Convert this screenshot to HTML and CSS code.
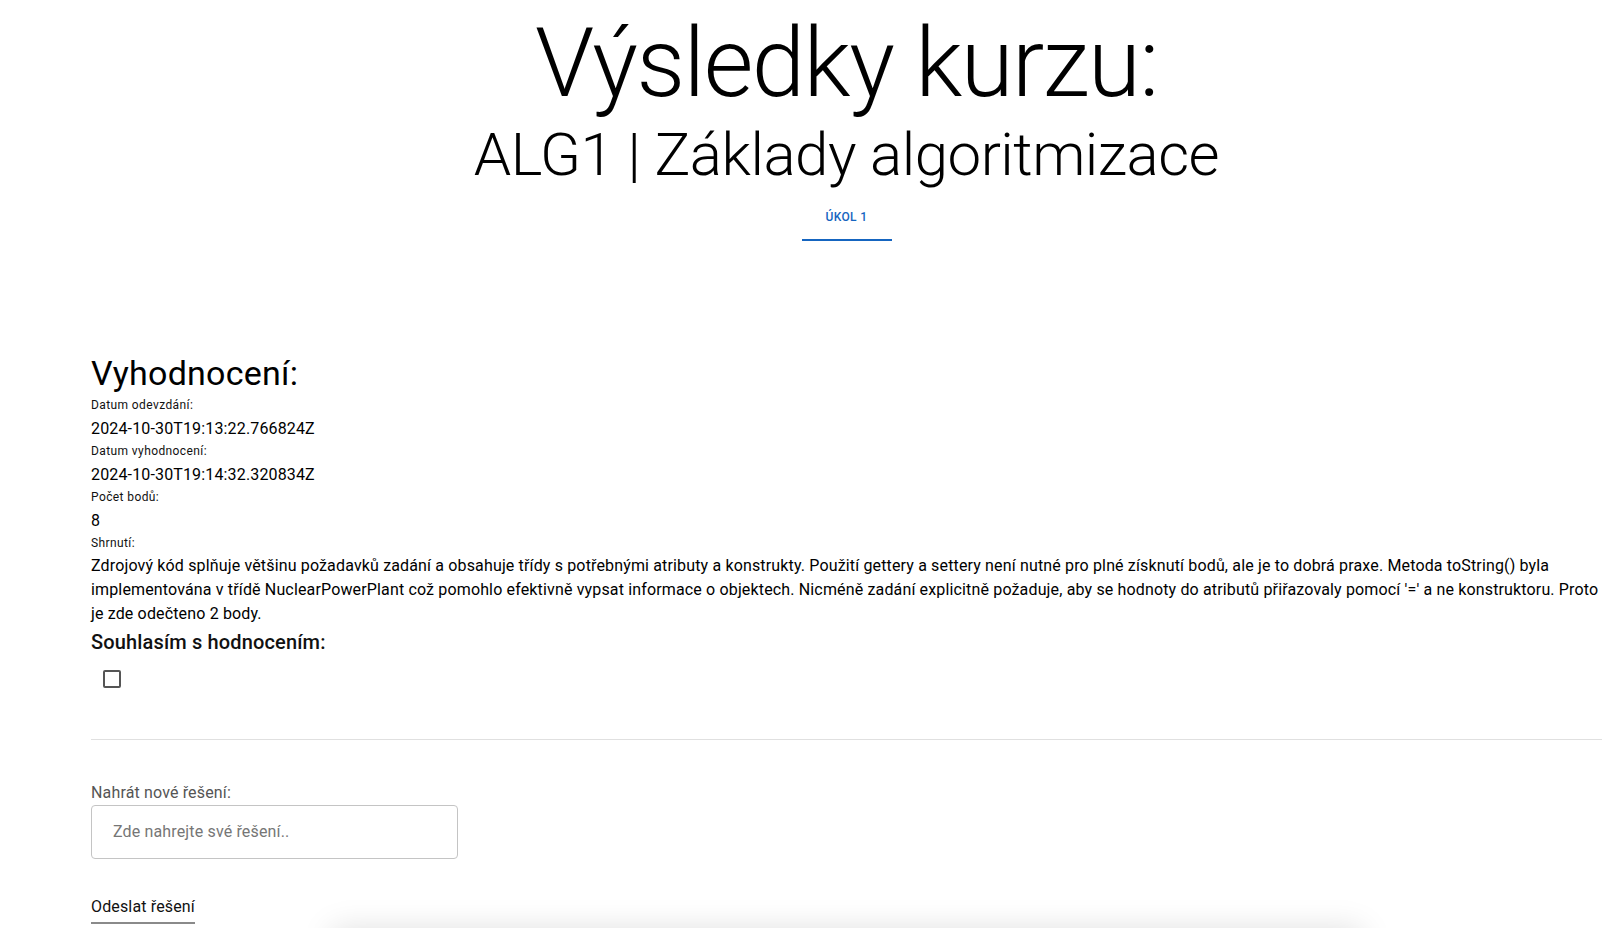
FILE: index.html
```html
<!DOCTYPE html>
<html lang="cs">
<head>
<meta charset="utf-8">
<title>Výsledky kurzu</title>
<link rel="stylesheet" href="styles.css">
</head>
<body>
<main class="page">
  <header class="header">
    <h1 class="title">Výsledky kurzu:</h1>
    <h2 class="subtitle">ALG1 | Základy algoritmizace</h2>
    <nav class="tabs">
      <button class="tab tab-active" type="button">Úkol 1</button>
    </nav>
  </header>

  <section class="evaluation">
    <h3 class="section-title">Vyhodnocení:</h3>
    <div class="field">
      <span class="field-label">Datum odevzdání:</span>
      <span class="field-value">2024-10-30T19:13:22.766824Z</span>
    </div>
    <div class="field">
      <span class="field-label">Datum vyhodnocení:</span>
      <span class="field-value">2024-10-30T19:14:32.320834Z</span>
    </div>
    <div class="field">
      <span class="field-label">Počet bodů:</span>
      <span class="field-value">8</span>
    </div>
    <div class="field">
      <span class="field-label">Shrnutí:</span>
      <p class="summary">Zdrojový kód splňuje většinu požadavků zadání a obsahuje třídy s potřebnými atributy a konstrukty. Použití gettery a settery není nutné pro plné získnutí bodů, ale je to dobrá praxe. Metoda toString() byla implementována v třídě NuclearPowerPlant což pomohlo efektivně vypsat informace o objektech. Nicméně zadání explicitně požaduje, aby se hodnoty do atributů přiřazovaly pomocí '=' a ne konstruktoru. Proto je zde odečteno 2 body.</p>
    </div>
    <h4 class="agree-title">Souhlasím s hodnocením:</h4>
    <label class="checkbox">
      <input type="checkbox" class="checkbox-input">
      <span class="checkbox-box"></span>
    </label>
  </section>

  <hr class="divider">

  <section class="upload">
    <label class="upload-label" for="solution">Nahrát nové řešení:</label>
    <input id="solution" class="upload-input" type="text" placeholder="Zde nahrejte své řešení..">
    <div class="submit-row">
      <button class="submit" type="button">Odeslat řešení</button>
    </div>
  </section>

  <div class="card"></div>
</main>
</body>
</html>
```
FILE: styles.css
```css
html, body {
  margin: 0;
  padding: 0;
  background: #ffffff;
}

body {
  font-family: Roboto, "Liberation Sans", sans-serif;
  color: #111111;
  overflow: hidden;
}

.page {
  padding: 0 18px 0 91px;
}

.header {
  display: flex;
  flex-direction: column;
  align-items: center;
}

.title {
  margin: 15px 0 0;
  font-weight: 300;
  font-size: 96px;
  line-height: 1;
  letter-spacing: -1.5px;
  color: #000;
}

.subtitle {
  margin: 7.5px 0 0;
  font-weight: 300;
  font-size: 60px;
  line-height: 1.2;
  letter-spacing: -0.5px;
  color: #000;
}

.tabs {
  display: flex;
  justify-content: center;
  margin-top: 2.5px;
}

.tab {
  min-width: 90px;
  height: 48px;
  padding: 2px 16px 0;
  border: none;
  border-bottom: 2px solid #1565c0;
  background: none;
  font-family: Roboto, "Liberation Sans", sans-serif;
  font-weight: 500;
  font-size: 12px;
  letter-spacing: 0.4px;
  text-transform: uppercase;
  color: #1565c0;
}

.evaluation {
  margin-top: 111px;
}

.section-title {
  margin: 0;
  font-weight: 400;
  font-size: 34px;
  line-height: 42.5px;
  letter-spacing: 0.25px;
  color: #000;
}

.field {
  display: flex;
  flex-direction: column;
}

.field-label {
  font-size: 12px;
  line-height: 21px;
  letter-spacing: 0.4px;
  color: #111;
}

.field-value {
  font-size: 16px;
  line-height: 25px;
  letter-spacing: 0.15px;
  color: #000;
}

.summary {
  margin: 0;
  font-size: 16px;
  line-height: 24px;
  letter-spacing: 0.15px;
  color: #000;
}

.agree-title {
  margin: 0;
  font-weight: 500;
  font-size: 20px;
  line-height: 32px;
  letter-spacing: 0.15px;
  color: #111;
}

.checkbox {
  display: inline-flex;
  align-items: center;
  justify-content: center;
  width: 42px;
  height: 42px;
  position: relative;
}

.checkbox-input {
  position: absolute;
  opacity: 0;
  margin: 0;
  width: 100%;
  height: 100%;
}

.checkbox-box {
  width: 14px;
  height: 14px;
  border: 2px solid #555;
  border-radius: 2px;
}

.divider {
  margin: 39px 0 0;
  border: none;
  border-top: 1px solid #e0e0e0;
}

.upload {
  display: flex;
  flex-direction: column;
  align-items: flex-start;
  padding-top: 41px;
}

.upload-label {
  font-size: 16px;
  line-height: 24px;
  letter-spacing: 0.15px;
  color: #555;
}

.upload-input {
  box-sizing: border-box;
  width: 367px;
  height: 54px;
  margin: 0;
  padding: 0 21px;
  border: 1px solid #c4c4c4;
  border-radius: 4px;
  font-family: Roboto, "Liberation Sans", sans-serif;
  font-size: 16px;
  letter-spacing: 0.15px;
  color: #111;
  outline: none;
}

.upload-input::placeholder {
  color: #767676;
}

.submit-row {
  margin-top: 36px;
}

.submit {
  padding: 0 0 3px;
  border: none;
  border-bottom: 2px solid #8a8a8a;
  background: none;
  font-family: Roboto, "Liberation Sans", sans-serif;
  font-size: 16px;
  line-height: 24px;
  letter-spacing: 0.15px;
  color: #111;
}

.card {
  width: 1020px;
  height: 200px;
  margin: 12px auto 0;
  background: #fff;
  box-shadow: 0 -2px 30px 5px rgba(0, 0, 0, 0.13);
}
```
